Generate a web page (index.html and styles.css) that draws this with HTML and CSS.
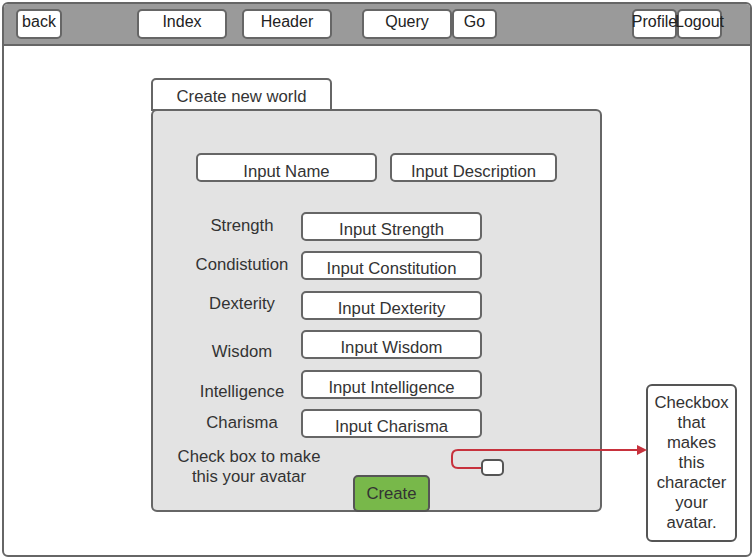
FILE: index.html
```html
<!DOCTYPE html>
<html lang="en">
<head>
    <meta charset="UTF-8">
    <meta name="viewport" content="width=device-width, initial-scale=1.0">
    <title>Create new world</title>
    <link rel="stylesheet" href="styles.css">
</head>
<body>
    <div class="frame">
        <div class="topbar">
            <div class="nav-btn back">back</div>
            <div class="nav-btn wide index">Index</div>
            <div class="nav-btn wide header">Header</div>
            <div class="nav-btn wide query">Query</div>
            <div class="nav-btn small go">Go</div>
            <div class="nav-btn small profile">Profile</div>
            <div class="nav-btn small logout">Logout</div>
        </div>

        <div class="main">
            <div class="world">
                <div class="tab">Create new world</div>
                <div class="panel">
                    <div class="top-inputs">
                        <div class="field name">Input Name</div>
                        <div class="field desc">Input Description</div>
                    </div>

                    <div class="stats">
                        <div class="stat-row">
                            <div class="stat-label">Strength</div>
                            <div class="field stat">Input Strength</div>
                        </div>
                        <div class="stat-row">
                            <div class="stat-label">Condistution</div>
                            <div class="field stat">Input Constitution</div>
                        </div>
                        <div class="stat-row">
                            <div class="stat-label up">Dexterity</div>
                            <div class="field stat">Input Dexterity</div>
                        </div>
                        <div class="stat-row">
                            <div class="stat-label drop">Wisdom</div>
                            <div class="field stat">Input Wisdom</div>
                        </div>
                        <div class="stat-row">
                            <div class="stat-label drop">Intelligence</div>
                            <div class="field stat">Input Intelligence</div>
                        </div>
                        <div class="stat-row">
                            <div class="stat-label">Charisma</div>
                            <div class="field stat">Input Charisma</div>
                        </div>
                    </div>

                    <div class="bottom-row">
                        <div class="avatar-text">Check box to make<br>this your avatar</div>
                        <div class="create-btn">Create</div>
                        <div class="checkbox"></div>
                    </div>
                </div>
            </div>

            <div class="note">Checkbox that makes this character your avatar.</div>
        </div>

        <!-- connector from checkbox to note -->
        <svg class="connector" width="754" height="560" viewBox="0 0 754 560">
            <path d="M481 468 H458 Q452 468 452 462 V456 Q452 450 458 450 H639" fill="none" stroke="#c7323d" stroke-width="2"/>
            <polygon points="637,445 647,450 637,455" fill="#c7323d"/>
        </svg>
    </div>
</body>
</html>
```

FILE: styles.css
```css
* {
    margin: 0;
    padding: 0;
    box-sizing: border-box;
}

body {
    font-family: "Liberation Sans", Arial, sans-serif;
    font-size: 16px;
    color: #333;
    background: #fff;
    overflow: hidden;
}

.frame {
    position: relative;
    width: 750px;
    height: 555px;
    margin: 2px 0 0 2px;
    border: 2px solid #666;
    border-radius: 6px;
}

.topbar {
    display: flex;
    align-items: flex-start;
    height: 42px;
    padding: 5px 0 0 12px;
    background: #9a9a9a;
    border-bottom: 2px solid #666;
    border-radius: 4px 4px 0 0;
}

.nav-btn {
    height: 30px;
    width: 46px;
    display: flex;
    justify-content: center;
    white-space: nowrap;
    line-height: 21px;
    color: #222;
    background: #fff;
    border: 2px solid #666;
    border-radius: 5px;
}

.nav-btn.wide {
    width: 90px;
}

.nav-btn.small {
    width: 45px;
}

.index { margin-left: 75px; }
.header { margin-left: 15px; }
.query { margin-left: 30px; }
.profile { margin-left: 135px; }

.main {
    display: flex;
    align-items: flex-start;
    padding: 32px 0 0 147px;
    font-size: 16.7px;
}

.world {
    width: 451px;
}

.tab {
    width: 181px;
    height: 33px;
    margin-bottom: -2px;
    padding-top: 7px;
    line-height: 20px;
    text-align: center;
    background: #fff;
    border: 2px solid #666;
    border-radius: 5px 5px 0 0;
}

.panel {
    position: relative;
    padding-top: 42px;
    background: #e3e3e3;
    border: 2px solid #666;
    border-radius: 6px;
}

.top-inputs {
    display: flex;
    margin-left: 43px;
}

.field {
    height: 29px;
    padding-top: 6px;
    line-height: 20px;
    text-align: center;
    white-space: nowrap;
    background: #fff;
    border: 2px solid #666;
    border-radius: 5px;
}

.field.name {
    width: 181px;
    padding-top: 7px;
}

.field.desc {
    width: 167px;
    margin-left: 13px;
    padding-top: 7px;
}

.stats {
    display: flex;
    flex-direction: column;
    gap: 10.4px;
    margin-top: 30px;
}

.stat-row {
    display: flex;
    align-items: flex-start;
    height: 29px;
}

.stat-label {
    width: 100px;
    margin-left: 39px;
    padding-top: 4px;
    line-height: 20px;
    text-align: center;
    white-space: nowrap;
}

.stat-label.up {
    padding-top: 3px;
}

.stat-label.drop {
    padding-top: 12px;
}

.field.stat {
    width: 181px;
    margin-left: 9px;
}

.bottom-row {
    display: flex;
    align-items: flex-start;
    margin-top: 8px;
}

.avatar-text {
    width: 150px;
    margin-left: 21px;
    padding-top: 1px;
    line-height: 20px;
    text-align: center;
    white-space: nowrap;
}

.create-btn {
    width: 77px;
    height: 37px;
    margin: 29px 0 -2px 29px;
    padding-top: 7px;
    line-height: 20px;
    text-align: center;
    background: #78b84a;
    border: 2px solid #555;
    border-radius: 5px;
}

.checkbox {
    width: 23px;
    height: 17px;
    margin: 13px 0 0 51px;
    background: #fff;
    border: 2px solid #555;
    border-radius: 5px;
}

.note {
    width: 91px;
    height: 158px;
    margin: 306px 0 0 44px;
    padding: 7px 5px 0;
    line-height: 20px;
    text-align: center;
    background: #fff;
    border: 2px solid #555;
    border-radius: 6px;
}

.connector {
    position: absolute;
    left: -4px;
    top: -4px;
    pointer-events: none;
}
```
